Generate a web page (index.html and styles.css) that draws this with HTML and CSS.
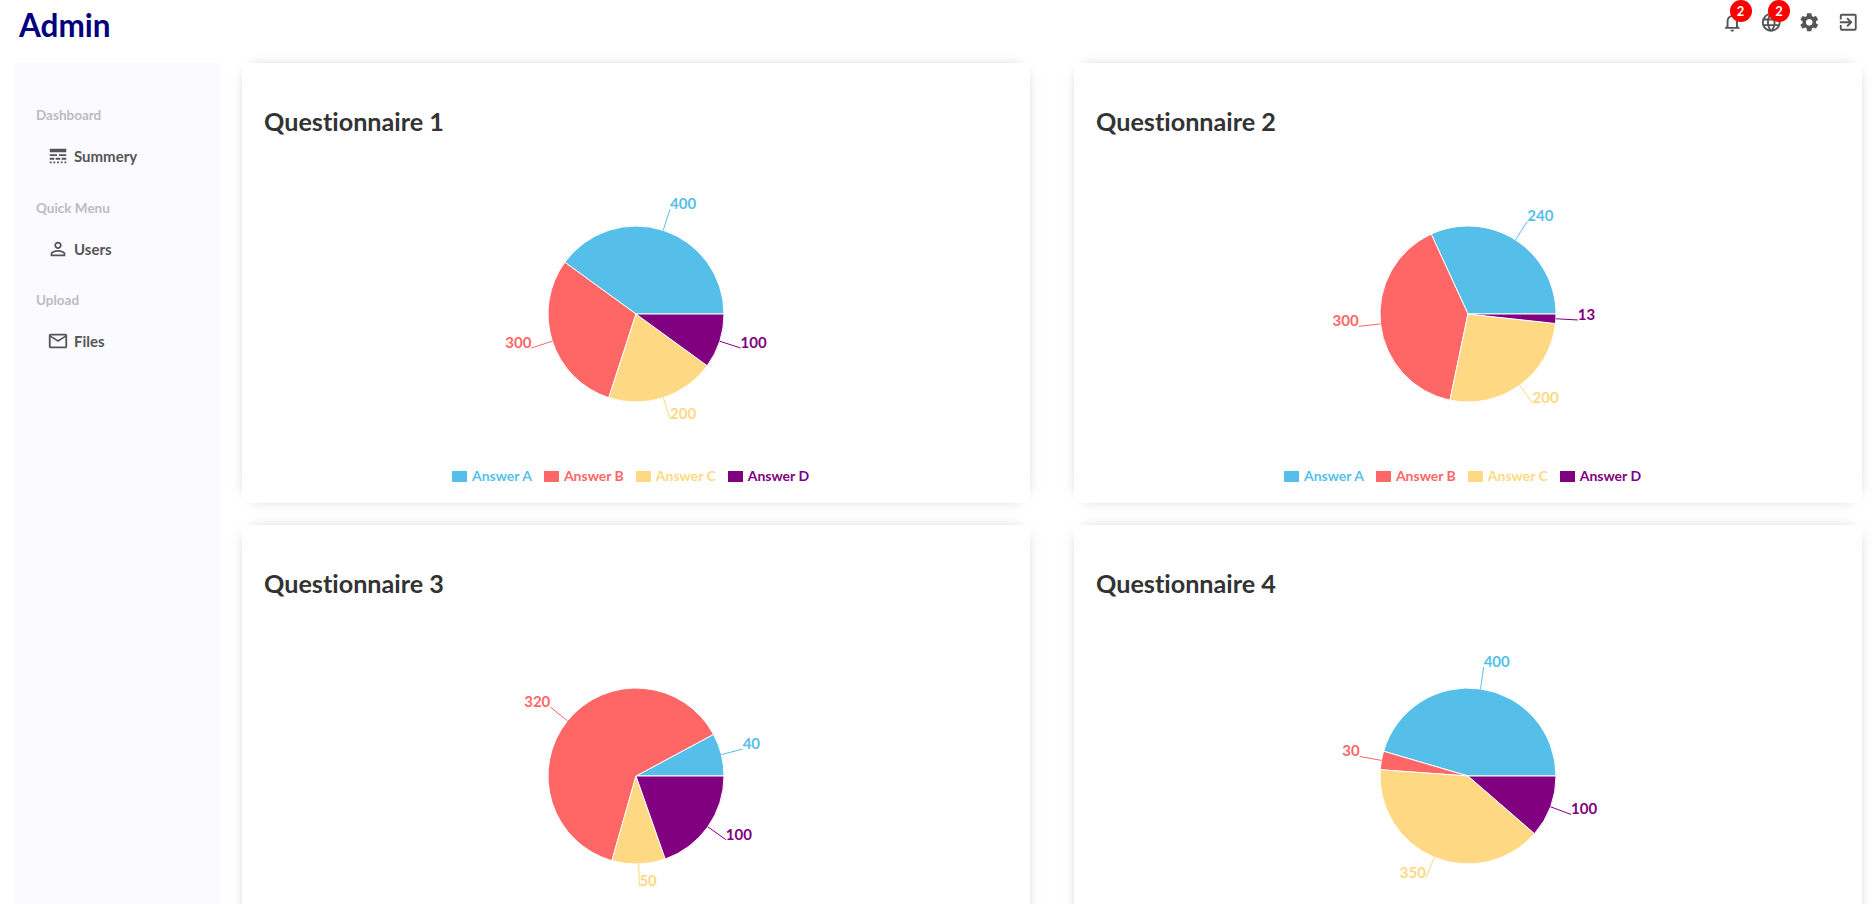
FILE: index.html
```html
<!DOCTYPE html>
<html>
<head>
  <title>Admin</title>
  <link rel="stylesheet" href="styles.css">
</head>
<body>
  <div class="topbar">
    <div class="logo">Admin</div>
    <div class="top-icons">
      <div class="top-icon">
        <svg viewBox="0 0 24 24"><path d="M12 22c1.1 0 2-.9 2-2h-4c0 1.1.9 2 2 2zm6-6v-5c0-3.07-1.63-5.64-4.5-6.32V4c0-.83-.67-1.5-1.5-1.5s-1.5.67-1.5 1.5v.68C7.64 5.36 6 7.92 6 11v5l-2 2v1h16v-1l-2-2zm-2 1H8v-6c0-2.48 1.51-4.5 4-4.5s4 2.02 4 4.5v6z"/></svg>
        <span class="badge">2</span>
      </div>
      <div class="top-icon">
        <svg viewBox="0 0 24 24"><path d="M11.99 2C6.47 2 2 6.48 2 12s4.47 10 9.99 10C17.52 22 22 17.52 22 12S17.52 2 11.99 2zm6.93 6h-2.95c-.32-1.25-.78-2.45-1.38-3.56 1.84.63 3.37 1.91 4.33 3.56zM12 4.04c.83 1.2 1.48 2.53 1.91 3.96h-3.82c.43-1.43 1.08-2.76 1.91-3.96zM4.26 14C4.1 13.36 4 12.69 4 12s.1-1.36.26-2h3.38c-.08.66-.14 1.32-.14 2 0 .68.06 1.34.14 2H4.26zm.82 2h2.95c.32 1.25.78 2.45 1.38 3.56-1.84-.63-3.37-1.9-4.33-3.56zm2.95-8H5.08c.96-1.66 2.49-2.93 4.33-3.56C8.81 5.55 8.35 6.75 8.03 8zM12 19.96c-.83-1.2-1.48-2.53-1.91-3.96h3.82c-.43 1.43-1.08 2.76-1.91 3.96zM14.34 14H9.66c-.09-.66-.16-1.32-.16-2 0-.68.07-1.35.16-2h4.68c.09.65.16 1.32.16 2 0 .68-.07 1.34-.16 2zm.25 5.56c.6-1.11 1.06-2.31 1.38-3.56h2.95c-.96 1.65-2.49 2.93-4.33 3.56zM16.36 14c.08-.66.14-1.32.14-2 0-.68-.06-1.34-.14-2h3.38c.16.64.26 1.31.26 2s-.1 1.36-.26 2h-3.38z"/></svg>
        <span class="badge">2</span>
      </div>
      <div class="top-icon">
        <svg viewBox="0 0 24 24"><path d="M19.14 12.94c.04-.3.06-.61.06-.94 0-.32-.02-.64-.07-.94l2.03-1.58c.18-.14.23-.41.12-.61l-1.92-3.32c-.12-.22-.37-.29-.59-.22l-2.39.96c-.5-.38-1.03-.7-1.62-.94l-.36-2.54c-.04-.24-.24-.41-.48-.41h-3.84c-.24 0-.43.17-.47.41l-.36 2.54c-.59.24-1.13.57-1.62.94l-2.39-.96c-.22-.08-.47 0-.59.22L2.74 8.87c-.12.21-.08.47.12.61l2.03 1.58c-.05.3-.09.63-.09.94s.02.64.07.94l-2.03 1.58c-.18.14-.23.41-.12.61l1.92 3.32c.12.22.37.29.59.22l2.39-.96c.5.38 1.03.7 1.62.94l.36 2.54c.05.24.24.41.48.41h3.84c.24 0 .44-.17.47-.41l.36-2.54c.59-.24 1.13-.56 1.62-.94l2.39.96c.22.08.47 0 .59-.22l1.92-3.32c.12-.22.07-.47-.12-.61l-2.01-1.58zM12 15.6c-1.98 0-3.6-1.62-3.6-3.6s1.62-3.6 3.6-3.6 3.6 1.62 3.6 3.6-1.62 3.6-3.6 3.6z"/></svg>
      </div>
      <div class="top-icon">
        <svg viewBox="0 0 24 24"><path d="M10.09 15.59L11.5 17l5-5-5-5-1.41 1.41L12.67 11H3v2h9.67l-2.58 2.59zM19 3H5c-1.11 0-2 .9-2 2v4h2V5h14v14H5v-4H3v4c0 1.1.89 2 2 2h14c1.1 0 2-.9 2-2V5c0-1.1-.9-2-2-2z"/></svg>
      </div>
    </div>
  </div>

  <div class="layout">
    <div class="sidebar">
      <h3 class="side-title">Dashboard</h3>
      <div class="side-item">
        <svg viewBox="0 0 24 24"><path d="M3 16h5v-2H3v2zm6.5 0h5v-2h-5v2zm6.5 0h5v-2h-5v2zM3 20h2v-2H3v2zm4 0h2v-2H7v2zm4 0h2v-2h-2v2zm4 0h2v-2h-2v2zm4 0h2v-2h-2v2zM3 12h8v-2H3v2zm10 0h8v-2h-8v2zM3 4v4h18V4H3z"/></svg>
        Summery
      </div>
      <h3 class="side-title">Quick Menu</h3>
      <div class="side-item">
        <svg viewBox="0 0 24 24"><path d="M12 5.9c1.16 0 2.1.94 2.1 2.1s-.94 2.1-2.1 2.1S9.9 9.16 9.9 8s.94-2.1 2.1-2.1m0 9c2.97 0 6.1 1.46 6.1 2.1v1.1H5.9V17c0-.64 3.13-2.1 6.1-2.1M12 4C9.79 4 8 5.79 8 8s1.79 4 4 4 4-1.79 4-4-1.79-4-4-4zm0 9c-2.67 0-8 1.34-8 4v3h16v-3c0-2.66-5.33-4-8-4z"/></svg>
        Users
      </div>
      <h3 class="side-title">Upload</h3>
      <div class="side-item">
        <svg viewBox="0 0 24 24"><path d="M20 4H4c-1.1 0-1.99.9-1.99 2L2 18c0 1.1.9 2 2 2h16c1.1 0 2-.9 2-2V6c0-1.1-.9-2-2-2zm0 14H4V8l8 5 8-5v10zm-8-7L4 6h16l-8 5z"/></svg>
        Files
      </div>
    </div>

    <div class="cards">
      <div class="card">
        <h2 class="card-title">Questionnaire 1</h2>
        <div class="chart" data-values="400,300,200,100" data-legend="yes"></div>
      </div>
      <div class="card">
        <h2 class="card-title">Questionnaire 2</h2>
        <div class="chart" data-values="240,300,200,13" data-legend="yes"></div>
      </div>
      <div class="card">
        <h2 class="card-title">Questionnaire 3</h2>
        <div class="chart" data-values="40,320,50,100"></div>
      </div>
      <div class="card">
        <h2 class="card-title">Questionnaire 4</h2>
        <div class="chart" data-values="400,30,350,100"></div>
      </div>
    </div>
  </div>

  <script src="charts.js"></script>
</body>
</html>
```

FILE: styles.css
```css
html, body {
  height: 100%;
  overflow: hidden;
}

body {
  margin: 0;
  background-color: white;
  font-family: "Lato", "Noto Sans", sans-serif;
  font-variant-ligatures: none;
}

/* Top bar */
.topbar {
  height: 63px;
  display: flex;
  justify-content: space-between;
  align-items: flex-start;
}

.logo {
  margin: 5px 0 0 19px;
  font-size: 31.5px;
  line-height: 40px;
  font-weight: bold;
  color: #000080;
}

.top-icons {
  display: flex;
  gap: 16px;
  margin: 11px 13px 0 0;
}

.top-icon {
  position: relative;
  width: 22.5px;
  height: 22.5px;
}

.top-icon svg {
  display: block;
  width: 100%;
  height: 100%;
  fill: #555;
}

.badge {
  position: absolute;
  top: -11px;
  right: -8px;
  width: 22px;
  height: 22px;
  border-radius: 50%;
  background-color: red;
  color: white;
  font-size: 13px;
  font-weight: bold;
  line-height: 22px;
  text-align: center;
}

/* Sidebar and cards */
.layout {
  display: flex;
  height: 841px;
}

.sidebar {
  width: 206px;
  margin-left: 14px;
  padding: 44px 0 0 22px;
  box-sizing: border-box;
  background-color: #fbfbff;
}

.side-title {
  margin: 0;
  font-size: 13.5px;
  line-height: 16px;
  font-weight: bold;
  color: #bbb;
}

.side-item {
  display: flex;
  align-items: center;
  gap: 5px;
  height: 22px;
  margin: 22px 0 32.5px 11px;
  font-size: 15px;
  font-weight: bold;
  color: #555;
}

.side-item svg {
  width: 22px;
  height: 22px;
  fill: #555;
}

.cards {
  display: grid;
  grid-template-columns: 788px 788px;
  grid-auto-rows: 440px;
  gap: 22px 44px;
  margin-left: 22px;
}

.card {
  background-color: white;
  box-shadow: 0 0 15px -10px rgba(0, 0, 0, 0.75);
}

.card-title {
  margin: 0;
  padding: 42px 22px 0;
  font-size: 25.2px;
  line-height: 32px;
  font-weight: bold;
  color: #333;
}

/* Pie charts */
.chart svg {
  display: block;
  margin-top: 13px;
}

.slice {
  stroke: white;
  stroke-width: 1;
}

.pie-label {
  font-size: 15px;
  font-weight: bold;
}

.legend {
  display: flex;
  justify-content: center;
  gap: 12px;
  padding-right: 11px;
  margin-top: 1px;
}

.legend-item {
  display: flex;
  align-items: center;
  gap: 5px;
  font-size: 14px;
  line-height: 18px;
  font-weight: bold;
}

.legend-box {
  width: 15px;
  height: 11px;
}
```

FILE: charts.js
```js
const names = ["Answer A", "Answer B", "Answer C", "Answer D"];
const colors = ["#56bfe9", "#ff6666", "#ffd884", "#800080"];

const cx = 394;
const cy = 164;
const radius = 88;
const labelRadius = 110;

function point(r, deg) {
  const a = deg * Math.PI / 180;
  return [cx + r * Math.cos(a), cy - r * Math.sin(a)];
}

function drawPie(chart) {
  const values = chart.dataset.values.split(",").map(Number);
  const total = values.reduce((a, b) => a + b, 0);
  let svg = "";
  let start = 0;

  values.forEach((value, i) => {
    const sweep = value / total * 360;
    const end = start + sweep;
    const mid = start + sweep / 2;
    const p1 = point(radius, start);
    const p2 = point(radius, end);
    const large = sweep > 180 ? 1 : 0;
    const lineFrom = point(radius, mid);
    const lineTo = point(labelRadius, mid);
    const anchor = lineTo[0] > cx ? "start" : "end";

    svg += `<path class="slice" fill="${colors[i]}" d="M${cx} ${cy}L${p1[0]} ${p1[1]}A${radius} ${radius} 0 ${large} 0 ${p2[0]} ${p2[1]}Z"/>`;
    svg += `<line stroke="${colors[i]}" x1="${lineFrom[0]}" y1="${lineFrom[1]}" x2="${lineTo[0]}" y2="${lineTo[1]}"/>`;
    svg += `<text class="pie-label" fill="${colors[i]}" text-anchor="${anchor}" x="${lineTo[0]}" y="${lineTo[1]}">${value}</text>`;
    start = end;
  });

  let html = `<svg width="788" height="316">${svg}</svg>`;

  // the lower cards run past the window, their legend is never seen
  if (chart.dataset.legend) {
    html += `<div class="legend">`;
    names.forEach((name, i) => {
      html += `<div class="legend-item" style="color: ${colors[i]}"><span class="legend-box" style="background-color: ${colors[i]}"></span>${name}</div>`;
    });
    html += `</div>`;
  }

  chart.innerHTML = html;
}

document.querySelectorAll(".chart").forEach(drawPie);
```
